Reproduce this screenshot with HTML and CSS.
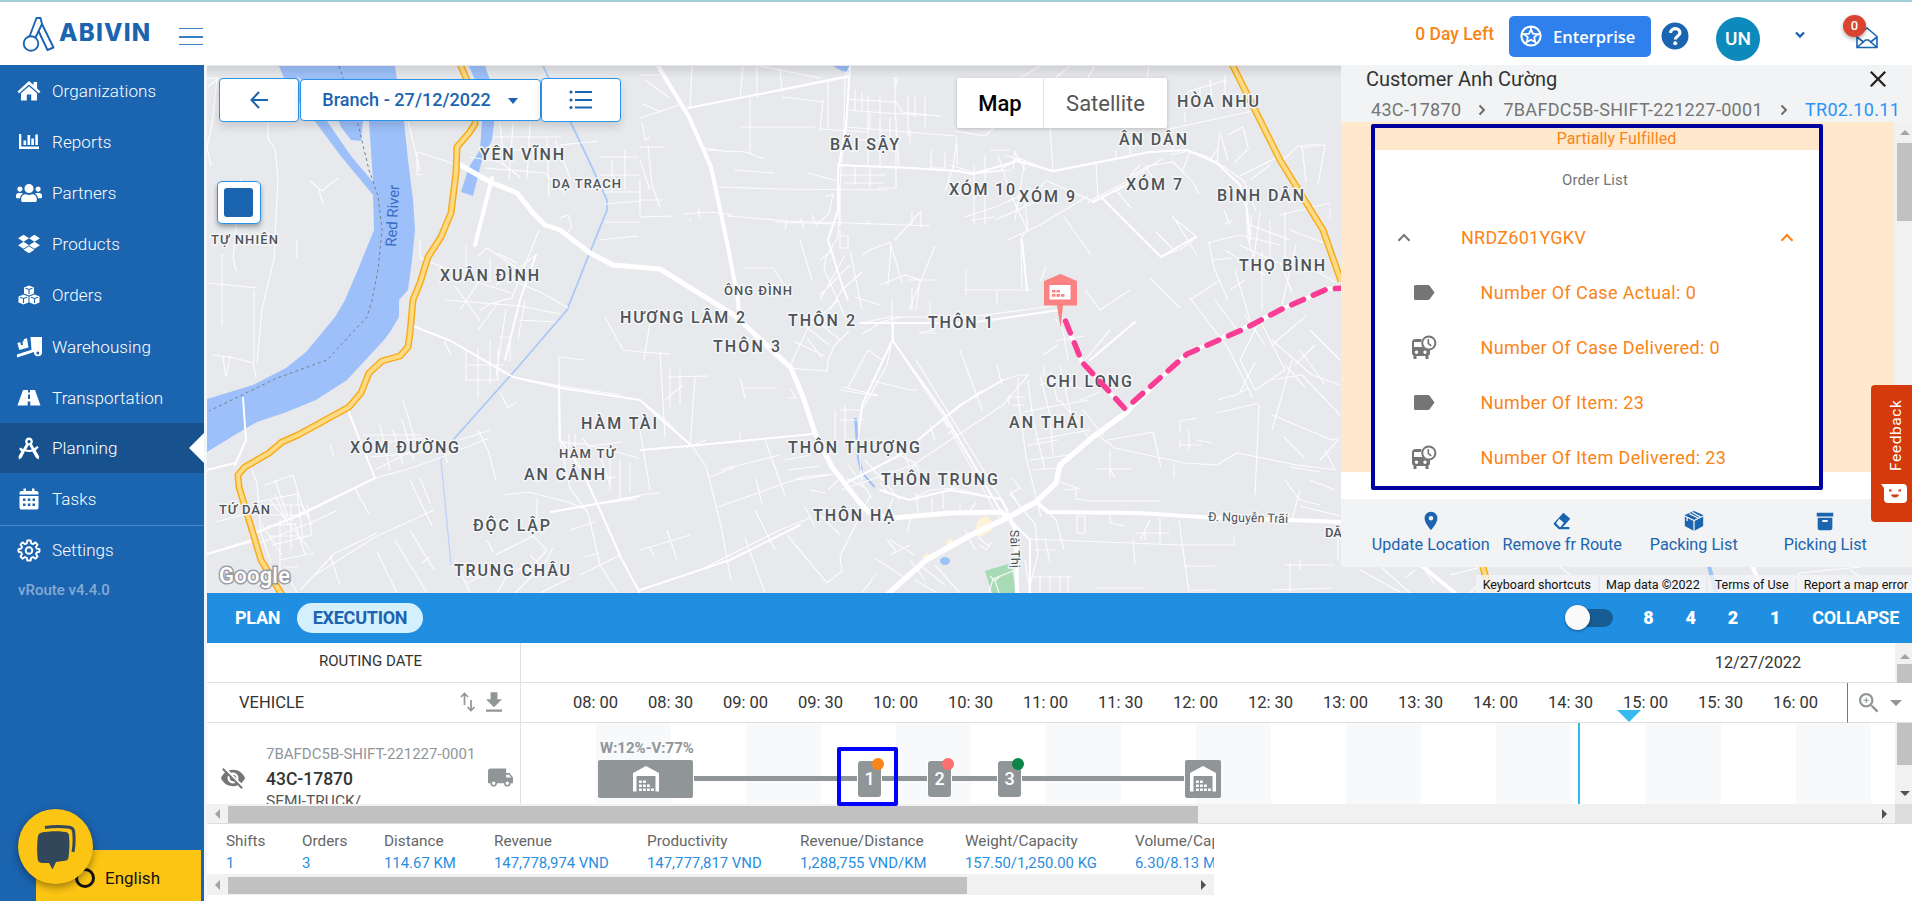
FILE: index.html
```html
<!DOCTYPE html>
<html lang="en">
<head>
<meta charset="utf-8">
<title>vRoute - Planning</title>
<link rel="stylesheet" href="styles.css">
</head>
<body>
<header class="header">
  <svg class="logo-mark" viewBox="0 0 34 36" width="34" height="36"><g fill="none" stroke="#1b64b0" stroke-width="1.9" stroke-linejoin="round"><circle cx="9" cy="27.5" r="7.3"/><path d="M7.5 20.5 14.5 2h4l1.5 6L13.500 21.500"/><path d="M20 8 31.500 31.500 25.500 34 16.500 15"/></g></svg>
  <span class="logo-text">ABIVIN</span>
  <span class="burger"><i></i><i></i><i></i></span>
  <div class="header-right">
    <span class="days">0 Day Left</span>
    <button class="enterprise"><svg viewBox="0 0 22 22" width="22" height="22" fill="none" stroke="#fff"><circle cx="11" cy="11" r="9.600" stroke-width="2"/><path stroke-width="1.800" d="m11 4.500 2 4.200 4.600.5-3.400 3.200 1 4.600-4.200-2.300L6.800 17l1-4.600L4.400 9.200 9 8.700zM11 1v3M2 9l2.500.5M20 9l-2.500.5M5 18.500 6.800 17M17 18.500 15.200 17"/></svg><span>Enterprise</span></button>
    <svg class="help" viewBox="0 0 28 28" width="28" height="28"><circle cx="14" cy="14" r="13.500" fill="#1b64b0"/><path d="M9.500 10.800c.5-5.600 9.600-5.400 9.400.1-.1 3.300-4.500 3.500-4.600 6.600" fill="none" stroke="#fff" stroke-width="3.200"/><circle cx="14.200" cy="21.300" r="2" fill="#fff"/></svg>
    <span class="avatar">UN</span>
    <svg class="chev" viewBox="0 0 12 8" width="12" height="8"><path d="m2 1.500 4 4 4-4" fill="none" stroke="#1b64b0" stroke-width="2.400"/></svg>
    <span class="mail"><svg viewBox="0 0 24 24" width="24" height="24" fill="none" stroke="#1b64b0" stroke-width="1.600"><path d="M2 10.500 12 2l10 8.500V21.500H2zM2 11l7 5.500M22 11l-7 5.500M2 21.500l8.500-7.500h3l8.500 7.500"/></svg><b>0</b></span>
  </div>
</header>

<div class="main">
<nav class="sidebar">
  <a class="item"><svg viewBox="0 0 26 24"><path d="M13 2 1.500 12.500l1.600 1.700L13 5.400l9.900 8.800 1.600-1.700-3.400-3.100V3h-3.600v3.100z"/><path d="M13 7.300 5 14.300V21.500h5.800v-6h4.400v6H21v-7.200z"/></svg>Organizations</a>
  <a class="item"><svg viewBox="0 0 26 24"><path d="M3 4h2.300v12.500H23v2.500H3zM7.500 10.500h2.600V15H7.500zM11.500 5h2.600v10h-2.600zM15.300 8.500h2.600V15h-2.600zM19.300 4.500h2.600V15h-2.600z"/></svg>Reports</a>
  <a class="item"><svg viewBox="0 0 640 512"><path d="M96 224c35.300 0 64-28.700 64-64s-28.700-64-64-64-64 28.700-64 64 28.700 64 64 64zm448 0c35.300 0 64-28.700 64-64s-28.700-64-64-64-64 28.700-64 64 28.700 64 64 64zm32 32h-64c-17.600 0-33.500 7.100-45.100 18.600 40.300 22.100 68.900 62 75.100 109.400h66c17.700 0 32-14.300 32-32v-32c0-35.300-28.700-64-64-64zm-256 0c61.900 0 112-50.100 112-112S381.900 32 320 32 208 82.100 208 144s50.100 112 112 112zm76.800 32h-8.300c-20.800 10-43.900 16-68.500 16s-47.600-6-68.500-16h-8.300C179.600 288 128 339.600 128 403.200V432c0 26.500 21.500 48 48 48h288c26.500 0 48-21.500 48-48v-28.800c0-63.600-51.600-115.200-115.200-115.200zm-223.700-13.400C161.500 263.100 145.600 256 128 256H64c-35.300 0-64 28.700-64 64v32c0 17.700 14.300 32 32 32h65.900c6.300-47.400 34.900-87.300 75.200-109.400z"/></svg>Partners</a>
  <a class="item"><svg viewBox="-50 -20 628 552"><path d="M264.400 116.300l-132 84.300 132 84.300-132 84.300L0 284.100l132.300-84.300L0 116.300 132.300 32l132.100 84.300zM131.600 395.700l132-84.300 132 84.300-132 84.300-132-84.300zm132.800-111.600l132-84.300-132-83.600L395.700 32 528 116.300l-132.300 84.300L528 284.800l-132.300 84.300-131.300-85z"/></svg>Products</a>
  <a class="item"><svg viewBox="0 0 26 24"><path d="m13 2.500 5 2v6l-5 2-5-2v-6zM7.500 11.500l5 2v6l-5 2-5-2v-6zM18.500 11.500l5 2v6l-5 2-5-2v-6z"/><path d="m9.500 5.200 3.500 1.300 3.500-1.300M13 6.500V11M4 14.200l3.500 1.300 3.500-1.300M7.500 15.500V20M15 14.200l3.500 1.300 3.500-1.300M18.500 15.500V20" fill="none" stroke="#1b64b0" stroke-width="1.100"/></svg>Orders</a>
  <a class="item"><svg viewBox="0 0 26 24"><path d="M14.500 2H26v15.500a4 4 0 1 1-8-.5L1 22.500v-3l14.500-4.700zM1.300 8l3-.7.8 3 2-.5-.8-3 1-.3L8 4l3-.7 1.500 9.200L3.300 15z"/><circle cx="21.800" cy="18" r="1.500" fill="#1b64b0"/></svg>Warehousing</a>
  <a class="item"><svg viewBox="0 0 26 24"><path d="M7 4h5v2.500h2V4h5l5.500 15.500H14.300V15.500h-2.600v4H1.500zM12 8.500V13h2V8.500z" fill-rule="evenodd"/></svg>Transportation</a>
  <a class="item active"><svg viewBox="0 0 26 24"><path d="M13 1.500a4 4 0 0 1 3 6.500l2.200 4.200 3-2.300 1.500 1.700-3 2.900 3.500 6-.6 3-2.700-1.700-3.500-6.200c-2.700.8-5 .6-7.500-.3L5.700 21.800 3 23.500l-.6-3L5.300 15.600 3 13l1.800-1.500 2.200 1.700L10 8a4 4 0 0 1 3-6.500zM13 8.800l-2.800 4.800c2 .6 3.600.6 5.600 0zM13 4a1.600 1.600 0 1 0 .01 0z" fill-rule="evenodd"/></svg>Planning</a>
  <a class="item"><svg viewBox="0 0 26 24"><path fill-rule="evenodd" d="M3.500 6a2 2 0 0 1 2-2h2V1.500h2.500V4h6V1.500h2.500V4h2a2 2 0 0 1 2 2v1.500h-19zM3.500 9h19v11.500a2 2 0 0 1-2 2h-15a2 2 0 0 1-2-2zM7 11.500V14h2.500v-2.500zM11.800 11.500V14h2.500v-2.500zM16.500 11.500V14H19v-2.500zM7 16.500V19h2.500v-2.500zM11.800 16.500V19h2.500v-2.500zM16.500 16.500V19H19v-2.500z"/></svg>Tasks</a>
  <a class="item settings"><svg viewBox="0 0 24 24"><g fill="none" stroke="#fff" stroke-width="1.900" stroke-linejoin="round"><path d="m10.300 2.500-.5 2.800-1.800.8-2.500-1.700-2 2.200L5 9l-.8 1.600-2.700.6v2.600l2.700.6.8 1.700-1.500 2.400 2 2.200L8 19l1.800.8.5 2.700h3.400l.5-2.700L16 19l2.500 1.700 2-2.200L19 16.100l.8-1.700 2.700-.6v-2.600l-2.700-.6L19 9l1.500-2.400-2-2.200L16 6.100l-1.800-.8-.5-2.800z"/><circle cx="12" cy="12.500" r="3.300"/></g></svg>Settings</a>
  <div class="version">vRoute v4.4.0</div>
  <div class="language"><i></i>English</div>
  <div class="chat"><svg viewBox="0 0 40 46" width="40" height="46"><path fill="#33475b" d="M8 8c6-1 18-1 22 0 2 .5 3 2 3 3.500.8 7 .6 15-.5 22-.4 2-1 2.300-2 3l-10.500 1.500L16.500 45.500 13 39H6c-3-.3-4-1.500-4.300-4C.9 28 .9 21 1.800 13 2 10 4 8.500 8 8z"/><path fill="none" stroke="#fdc513" stroke-width="2" d="M4 7.500c9-2 20-2 27-.5 3 .8 3.500 2.500 3.700 5 .7 8 .5 14-.7 20.500"/><path fill="none" stroke="#33475b" stroke-width="3" d="M9 3.500c9-1.500 17-1.300 24.500-.2 3 .5 4 2 4.200 4.700.7 7 .6 13.500-.7 20"/></svg></div>
</nav>

<section class="content">
<div class="map">
<svg class="tiles" viewBox="207 66 1705 527" width="1705" height="527">
  <rect x="207" y="66" width="1705" height="527" fill="#e8e9ed"/>
  <!-- water -->
  <g fill="#9dc0fa">
    <path d="M279 66 289 90 314 120 340 155 373 195 374 230 359 267 345 300 335 317 306 352 286 368 253 385 207 399V452L238 433 257 422 284 413 316 400 347 380 384 340 390 332 399 317V300L408 290 412 260 415 230 413 200 408 160 404 121 397 80 395 66z"/>
    <path d="M469 66H485L490 80 494 123 492 140 482 160 473 196 461 192 469 167 480 150 482 121 475 80z"/>
    <path d="M833 66h16l1 6-8-1zM854 418h3l2 35 4 17-3 1-3-13zM862 471l13 15-1 2-11-13z"/><ellipse cx="945" cy="561" rx="5" ry="4"/>
  </g>
  <path fill="#e8e9ed" d="m294 72 33 49 24 35 22 26-4-61h-6l-2 20-10-1-10-13-8-22-36-29z"/>
  <path d="M543 66 571 123 590 163 607 200V210L588 257 567 310 518 367 453 440" stroke="#a9c8fa" stroke-width="1.800" fill="none"/>
  <path d="m453 440-12 20 10 105" stroke="#bdd3f8" stroke-width="1.300" fill="none"/>
  <path d="M1709 566 1716 593" stroke="#9dc0fa" stroke-width="4"/>
  <path d="M339 66 357 120 369 170 378 196 382 230 378 270 372 300 367 317 327 360 277 378 209 411" fill="none" stroke="#777f8b" stroke-width="1" stroke-dasharray="3 3"/>
  <path fill="#a8dab5" d="m985 571 26-8 5 30h-24z"/><path fill="#fdf3d8" d="m978 520 8-5 6 6-1 10-12 7-5-4zM945 542l6-4 3 4-6 4zM922 557l6-5 2 6-6 3z"/>
  <!-- local streets -->
  <g fill="none" stroke="#fff" stroke-width="1.200" opacity=".9">
    <path d="M207 78h10l-4 40-6 30 4 18M268 121v18l7 10 3 30-4 80-12 50-5 54M217 79l-9 8M241 178l-8 80 3 13M207 283l50 5M222 254v72M254 291v71M310 181l12 10 16-13M297 240v18M319 190l4 14M213 355l17 2 23 6 3 14M223 357l3 20 4-21"/>
    <path d="M408 121l12 50M418 152l40 13M417 152v22l5 1M420 240v18l20 8 33 15 38 12M466 245v30M478 256l9-8 30 20-10 16M480 280l-20 30M497 253l20 10M490 258v25M512 280l32 14 24 14M539 230l-28 70M536 255l-40 30M500 300l-22 30M455 286l25 35"/>
    <path d="M493 137h68M497 150h62M485 168l60 5 20 20M500 124l4 40M513 124l-4 55M530 124l-3 55M547 137l2 60M555 140l16 40M470 157l30 5 20 15M560 145l38-4M600 175h40M604 192h36M600 157h38M612 160v32M625 150v40M605 204l35-3M640 180v35M560 218l8-3 4 12-8 10M605 222h35M600 240l38-4"/>
    <path d="M413 326l38 15 62 36 48 9 60 9M444 341l7 14M466 350v30h32v-32M478 348v50M490 340v44M466 365h38M498 337h12v25M506 309l-10 67M559 356v85l12 2M560 357l24 3M525 300l-7 40M605 317l18 33 17 2M518 320l38 2M500 392l8 16 8-6M480 310l10-6 20-6M445 300l75 6 40 8"/>
    <path d="M347 407l28 72M375 478l-25 12-60 28M375 478l30-8 35-12 49-20M355 488l14 26M362 435h60M365 445l65-8M370 457l60-5M380 425l10 45M393 430l10 35M402 420l12 40M415 448l14-7M440 445l8 18M403 400l12 40M330 445l4 12M478 430l10 20 8 30M410 480l22 46M420 478l10 25M460 440l30-10M375 470l50-26"/>
    <path d="M215 522l32-8M213 552l44-14M250 465l7 18 4 50 10 30M257 502l40-8 6 45M265 485l28-10 12 40M275 480l14 40M262 505h40M264 515h34M267 526l28-2 10 30M270 536h30M272 545l40-10-5-30M280 520v50M291 505v45M300 500l12 25M260 543l50-20 26-12M279 560l35-7M285 570l12 23M275 495l14 30M262 525l20 30M270 500l40 50M283 567h15"/>
    <path d="M315 575l60-38 59-27M330 555l10 30M377 552l20 41M395 540l32 53M410 530l24 40M300 590l35-37 42-20M422 563l8-6M487 540l6 12M498 592l8-15 20-12M515 593l20-20 10-10 8-15M525 540l8-4 14 14-18 20-8-6M530 555l10 10M551 512l46-8 40-5M503 495l25-3 40 10 20 8M560 443l10 45 18 25 12 52 18 28M537 498v28M495 555l30-15M570 530l25-8M585 557l14-4M580 575l40-20M455 560l15 33M467 583l18-8M540 593l30-15"/>
    <path d="M561 443l23 1 25 6 30 8M569 434v14M575 434v14M582 438l10 12M588 446l35-4M600 455l10 30M610 460v30M620 460v40M630 462v30M588 480l28-3"/>
    <path d="M640 118l42-14M642 122l3 18 5-3M640 147h25M648 145l4 40 8 22M640 200h23M640 217l33-1M683 214l27-2 22 3M699 208v10M690 218v3M640 160l10 30M643 104l18 8M645 80l25 18M640 75h20M692 66l-2 42M750 98v56M740 127h75M752 96l98-19M760 66l60 12M743 66l-3 33M780 70l2 22M757 66v32M782 97l43 5M850 66l-5 11-1 50-4 60-2 50-12 20-2 12 22 50M706 150l40 2 18 7M734 170l40 3M718 187l60 2 110 1M728 216l60 5 90 3 52 2M705 148l25 4"/>
    <path d="M828 80v48M820 129l46 3M823 100l-3 30M846 99l50 3 6 10 36 4M846 110l40 3 55 3M846 127l50 4 60 5M855 90v20M862 92v18M868 95v70M880 95v20M895 78v30l4 60M908 96v40M915 97v20M925 97v30M870 114v16M880 117v52M890 118v20M893 78h5l-3 10M910 130v14M845 140h40M838 165l60 2 60 4 15 3 38-4M838 175h48M845 183h40M855 165v20M870 165v22M896 130v58h-18M931 150v18h14v-15M808 173l30 8M840 187v40M825 197l8-3-4 20-12 10M775 222l60 2M787 220l-2 10M800 218l4 10M812 215l5 12M840 224v-10M912 211v15M921 210v17M868 220v5"/>
    <path d="M957 137l-4 30-8 24M957 145v20M950 165l25 8 25-3 18-12 35 14 80-16M1050 128l3 43M1005 126h-10l-10 10-30-5M998 155l14 42 15 32-6 10 1 50M985 155v70M974 165v60M1005 155l15 5 5 10M1015 150l-2 20M990 150h20M965 217l30-10 45-20M970 220l25-3M1015 152l5 12M1025 160l-10 60M1040 200l-45 20M1045 180l50 22M1088 202l15-8 30-16 30-20M1008 240l30-14 50-30M1045 182l-20 20 3 30M1064 217l27 38M1103 199l58 58 20-8 16-12-25-20M1116 190l15 18M1172 215l25 40M1156 232l17 17M1128 178l20-12 25-4 20 20 6 12M1145 165l12 20M1130 175l10-10M1096 162l2 35"/>
    <path d="M1094 66l-7 14M1149 66l-2 12M1040 66l-20 12M1070 66l-15 12M1187 92l40-12M1200 98v-12M1212 97l-2-18M1225 100v-25M1165 130l92-20M1185 122v-10M1170 155l18-4 16 4 20 12 20 14 12 30M1190 152l-8 20M1217 165l2-30M1240 176l40-20M1234 163l15-15M1228 135l15-8 5 20M1270 165l-20 15M1210 160l8-12M1116 160v-10M1130 157v-12M1173 151v-10M1220 132l8 28"/>
    <path d="M1247 201v35l6 20M1251 215v20M1207 243l32-8M1209 243l5 25 14 32M1212 260l20-2M1230 225l-6-15M1233 220l-8 4M1240 235l40 10M1240 245l38 18M1260 212l-8 60M1270 220v50M1250 225l40 15M1285 212v50M1225 250l40 25M1235 270l15 50M1262 250v60M1300 148l25-3-7 40M1302 145l4 37M1283 160l15-14 22-2M1330 208v10M1280 215l50-12M1290 230l40 15M1280 262l12 30M1296 245l-14 60M1300 262l35 20M1230 290l15-10M1215 300l22 30"/>
    <path d="M652 310l-8 50M640 352l30 2M660 352l5 85M668 377l40-1M665 400l18-15M670 368v40M680 370v35M695 377l-5 70M740 378l5 20M742 388h35M790 388l6 10M787 398h10M640 450l50-4 80-8 45-4M740 440v-8M640 400l25 20 25 25M640 430l10 60M692 446l14 20 15 60 10 55M706 440l-20 8M640 495l20-2M718 507l85-30 30-3M710 477l25-10M765 440l20 55M756 479l6 25M720 470l60-15M785 460l25-5M789 470l30-4M797 480l32-5M810 490l15 3M640 550l50-15M650 548l4 8M640 590l60-20 80-40 30-12M667 530l10 30M787 535l40 48 15-12-2-15 30-60M755 510l20 40M745 538l20 55M805 507l10 20M820 515l20 20"/>
    <path d="M862 334l14-8 5-4 20-5M789 368l20-42 30-26M789 368l38 3 1-10 6-15 15-15M807 338l15 20M795 342l30 14M804 325l25 20M810 315l30 25M880 305l-25-8M860 323l30-6h80l90-12M892 300v40l-5 25-25 45-4 30 4 40M868 350l14 10M868 350l-20 37M842 387l36 8M840 390l38 6M870 380l40 10h8M835 410v30M845 405v35M840 420h25M840 410h20M892 340l52 78 55 100M916 360l92 150M912 310v-22M930 320v-18M960 350l22 60M997 365l5 20M1003 380l15-5h10l-25 30-90 60-72 25M918 333h18M921 332l14-2M943 418l5 10M982 390l-40 30M930 425l5 15M948 434l6-5"/>
    <path d="M1018 377v20l8 60 15 60M1010 397h15M1012 405h12M1009 395v10M1028 380l5 40 12 50M1040 375l10 40 3 40M1023 412l65-12M1050 372l8 30M1060 365l10 45 20 30M1040 385l15-5M1068 360l-5-30-8-12M1055 341l30-5M1043 355l15-10M1044 365v12M1090 360l45-38M1075 380l-10 10M1060 380l25 10M1080 400l20-8M1030 460l40-5M1033 470l25-2M1035 440l55-10M1060 400l20 25M1028 445l30-5M1083 410l20 25"/>
    <path d="M1095 433l20 15 70 15 32 2 20-12 60 12 40 5M1108 440l45-8 8 35M1180 433v-12l17-3M1180 445h22M1189 430v20M1197 440l15 3M1218 400l15-5M1231 398l17-10M1240 392l15-30M1110 450v28M1097 469h35M1110 469l5 9M1174 463v15M1217 413l42-10M1259 405l-4 90M1180 440v8M1064 490l12-1v10l14 2h70M1060 482l20 7M1036 500l20 20 8 30M1085 516v17h-8v-17zM1110 515v8l15 3M1145 530v10M1160 518v25M1179 520l10 73M1234 535v10h-55l-150-6M1045 538l5 25M1035 550h20M1133 540l2 25M1183 566h32M1190 590h25M1095 588h50M1150 520l-10 20M1135 533h35"/>
    <path d="M1012 478l8 10-10 6 25 30 3 30-10 40M1010 490l12 20M1025 560l5 33M1040 575v18M1050 575v18M1060 575v18M1068 575v18M1033 577h40M880 483l8 10 22 7 20-10 25-2 45 12M893 498l-8 20M911 518l-4 14M943 491v18M880 480l12-10M895 453l20 10 4 8M905 455l5 15 5-5M865 460l35 40M848 465l15 20M862 483l10 15M846 478l20 10M828 490l15-15M918 513l-2-20M932 513v-15M960 512v-8M970 510l6-7M965 530l10 20M978 537l12 10M980 545l6 5 6-8M887 540l10 12M890 555l20-10M875 558l30 20M905 575l15-5M910 560l15 20M915 580l22 13M935 565l25 28M890 540l25 15M862 593l15-20M920 565l25 20"/>
    <path d="M1272 340l40 35 28 10M1272 380l30-5 38 40M1285 365l20 22M1300 350l25 35M1315 345l-20 20M1272 430l20-70M1284 437l20 20M1290 467l30 5M1320 460l18-20M1285 480l15 20 20 5M1310 480l25 10M1300 490l-8 30M1325 450l10 20M1272 415l60 25 7-2M1310 330l30 30M1300 506l40 10M1290 563v30M1300 560v10M1272 590l60-2M1338 520v40M1284 565h50"/>
    <path d="M1272 345l35-30M1190 300l30-20M1245 315l20 30M1260 320l25 50-30 20-15-30zM1190 298l38 50 25 50M1150 278l30 30M1110 330l-25 30M1085 290l15 20 30-20"/>
    <path d="M895 240l25-28M862 255l8-5 20-8 12 40M880 285l25-10 15 5-4 30M888 285l3-40M850 250l12 60M830 310l12-20 20-18M820 300l25-45M800 240l12 40M908 280l30 0M935 246l-26 64M965 290h65M966 270v25M997 290v15M1040 282l6-15M820 260l10-8M745 268h28l10 15M850 265l-30 30M840 230v18h8v-12h-8"/>
    <path d="M1360 570l40 22M1380 566l30 27M1415 570l-10 8M1425 570l10 15M1450 575l40-10M1470 593l20-20M1560 567l20 15M1600 593l60-15M1780 593l20-20 60-6M1850 570l30 20"/>
    <path d="M990 576l5 5 5-5M995 581l4 12M989 593l4-14 20-8"/>
  </g>
  <!-- arterial roads -->
  <g fill="none" stroke="#fff" stroke-linejoin="round" stroke-linecap="round">
    <g stroke-width="2"><path d="M413 326 451 341 513 377 561 388 640 400 665 423 691 445M641 450 700 445 812 434M860 323 892 323H970L1060 310M688 108 750 96 849 76M850 66 846 127 838 170 838 210 828 240 842 285 848 300M838 165 910 168 958 171 972 174 1018 161 1053 171 1150 152 1187 150 1217 163 1240 185 1247 210 1250 240M893 323V341L943 412 1000 510 1030 540 1030 593M892 341 862 405 859 430M1003 380 960 405 900 455 846 483M640 590 730 560 800 525M559 385 560 440 582 470 600 510 622 560 640 593M551 512 640 496M1103 199 1161 257 1195 237M1022 240 1027 290M880 490 909 500 950 490 1001 499 1009 515M1093 202 1130 183M347 408 375 478 300 515 250 535M536 255 520 300 505 360M207 554 252 541M243 398 246 440 235 465M207 470 235 463M1090 360 1135 322"/></g>
    <path stroke-width="5" d="M457 163 490 182 517 193 533 213 545 225 560 230 590 253 613 265 660 269 681 282 734 315 791 368 803 397 815 433 832 467 860 503 872 515 893 518 950 513 1001 512 1009 518"/>
    <path stroke-width="4" d="M658 66 689 117 711 167 728 247 738 300 739 317M1036 502 1048 512 1140 513 1200 517 1290 520 1341 522M1009 518 1016 530 1017 593M492 178 475 245M1422 566 1455 593M1752 566 1765 593"/>
    <path stroke-width="5.500" d="M889 593 926 560 967 537 1009 517 1036 502 1056 483 1060 465 1093 437 1127 412"/>
    <path stroke-width="4" d="M1064 320 1082 362 1127 412 1187 353 1244 328 1280 310 1327 289 1341 288"/>
  </g>
  <!-- highways -->
  <g fill="none" stroke-linejoin="round">
    <g stroke="#f7ac1b" stroke-width="7"><path d="M460 64 467 80 475 113V124L469 133 457 147 456 173 451 213 441 237 428 257 420 283 413 300 410 333 408 347 400 356 382 361 369 373 361 393 349 407 298 435 282 442 269 453 245 467 238 475 239 487 249 520 261 560 282 595"/><path d="M1232 64 1255 110 1280 160 1323 230 1341 281M1482 564 1491 595"/></g>
    <g stroke="#fddb84" stroke-width="4"><path d="M460 64 467 80 475 113V124L469 133 457 147 456 173 451 213 441 237 428 257 420 283 413 300 410 333 408 347 400 356 382 361 369 373 361 393 349 407 298 435 282 442 269 453 245 467 238 475 239 487 249 520 261 560 282 595"/><path d="M1232 64 1255 110 1280 160 1323 230 1341 281M1482 564 1491 595"/></g>
  </g>
  <!-- place labels -->
  <g class="lbl">
    <text x="480" y="160" textLength="84">YÊN VĨNH</text><text x="440" y="281" textLength="99">XUÂN ĐÌNH</text>
    <text x="830" y="150" textLength="69">BÃI SẬY</text><text x="949" y="195" textLength="66">XÓM 10</text>
    <text x="1019" y="202" textLength="56">XÓM 9</text><text x="1126" y="190" textLength="56">XÓM 7</text>
    <text x="1119" y="145" textLength="68">ÂN DÂN</text><text x="1177" y="107" textLength="82">HÒA NHU</text>
    <text x="1217" y="201" textLength="87">BÌNH DÂN</text><text x="1239" y="271" textLength="86">THỌ BÌNH</text>
    <text x="620" y="323" textLength="125">HƯƠNG LÂM 2</text><text x="788" y="326" textLength="67">THÔN 2</text>
    <text x="928" y="328" textLength="65">THÔN 1</text><text x="713" y="352" textLength="67">THÔN 3</text>
    <text x="1046" y="387" textLength="86">CHI LONG</text><text x="1009" y="428" textLength="75">AN THÁI</text>
    <text x="788" y="453" textLength="132">THÔN THƯỢNG</text><text x="881" y="485" textLength="117">THÔN TRUNG</text>
    <text x="813" y="521" textLength="81">THÔN HẠ</text><text x="581" y="429" textLength="76">HÀM TÀI</text>
    <text x="524" y="480" textLength="81">AN CẢNH</text><text x="350" y="453" textLength="109">XÓM ĐƯỜNG</text>
    <text x="473" y="531" textLength="77">ĐỘC LẬP</text><text x="454" y="576" textLength="116">TRUNG CHÂU</text>
  </g>
  <g class="lbl small">
    <text x="552" y="188" textLength="69">DẠ TRẠCH</text><text x="211" y="244" textLength="67">TỰ NHIÊN</text>
    <text x="724" y="295" textLength="68">ÔNG ĐÌNH</text><text x="559" y="458" textLength="56">HÀM TỬ</text>
    <text x="219" y="514" textLength="51">TỨ DÂN</text><text x="1325" y="537">DÂ</text>
  </g>
  <g class="lbl road"><text x="1208" y="521" textLength="80" transform="rotate(1.500 1208 521)">Đ. Nguyễn Trãi</text><text x="0" y="0" textLength="38" transform="translate(1010 530) rotate(88)">Sài Thị</text></g>
  <text class="river" textLength="62" transform="translate(396 247) rotate(-87)">Red River</text>
  <text class="google" x="219" y="583" textLength="71">Google</text>
  <!-- route and stop marker -->
  <path d="M1065.500 321 1082 362 1127 411M1133 402 1187 354 1244 329 1280 310 1327 289 1345 288" fill="none" stroke="#fa3d94" stroke-width="5.500" stroke-linecap="round" stroke-dasharray="13 10.500"/>
  <path fill="#fb8282" d="M1044 281 1060.500 274 1077 281V305.500H1063L1060.500 328 1057 305.500H1044z"/>
  <path fill="#fff" d="M1049.500 285h21v14.500h-21z"/><path fill="#fb8282" d="M1052 290h3.500v2.500H1052zM1056.500 290h3.500v2.500h-3.500zM1052 294h3.500v2.800H1052zM1056.500 294h3.500v2.800h-3.500zM1061 294h3.500v2.800H1061z"/>
</svg>

<div class="toolbar">
  <button class="tb side"><svg viewBox="0 0 24 24" width="24" height="24"><path fill="none" stroke="#1b64b0" stroke-width="2" d="M21 12H4.500M12 4 4.500 12l7.500 8"/></svg></button>
  <button class="tb branch">Branch - 27/12/2022<i class="caret"></i></button>
  <button class="tb side"><svg viewBox="0 0 24 20" width="24" height="20" fill="#1b64b0"><path d="M6 1h17v2H6zM6 9h17v2H6zM6 16.500h17v2H6z"/><circle cx="2" cy="2" r="1.600"/><circle cx="2" cy="10" r="1.600"/><circle cx="2" cy="17.500" r="1.600"/></svg></button>
</div>
<div class="square"><i></i></div>
<div class="maptype"><span class="on">Map</span><span>Satellite</span></div>
<div class="attrib"><span>Keyboard shortcuts</span><span>Map data ©2022</span><span>Terms of Use</span><span>Report a map error</span></div>

<aside class="panel">
  <div class="p-title"><span>Customer Anh Cường</span><svg viewBox="5 5 14 14" width="16" height="16"><path fill="#222" d="M19 6.410 17.590 5 12 10.590 6.410 5 5 6.410 10.590 12 5 17.590 6.410 19 12 13.410 17.590 19 19 17.590 13.410 12z"/></svg></div>
  <div class="crumbs"><span>43C-17870</span><svg viewBox="0 0 8 12"><path d="m1.500 1.500 4.500 4.500-4.500 4.500"/></svg><span>7BAFDC5B-SHIFT-221227-0001</span><svg viewBox="0 0 8 12"><path d="m1.500 1.500 4.500 4.500-4.500 4.500"/></svg><span class="cur">TR02.10.11</span></div>
  <div class="p-body">
    <div class="p-scroll">
      <div class="orders">
        <div class="status">Partially Fulfilled</div>
        <div class="o-head">Order List</div>
        <div class="o-code"><svg viewBox="0 0 14 9" width="14" height="9"><path d="m1.500 7.800 5.500-5.800 5.500 5.800" fill="none" stroke="#757575" stroke-width="2"/></svg><span>NRDZ601YGKV</span><svg viewBox="0 0 14 9" width="14" height="9"><path d="m1.500 7.800 5.500-5.800 5.500 5.800" fill="none" stroke="#fa8416" stroke-width="2"/></svg></div>
        <div class="o-row"><svg viewBox="0 0 26 26"><path d="M3 6.500A1.500 1.500 0 0 1 4.500 5H17c.8 0 1.400.3 1.800.9l4.700 6.600-4.700 6.600c-.4.600-1 .9-1.800.9H4.500A1.500 1.500 0 0 1 3 18.500z"/></svg>Number Of Case Actual: 0</div>
        <div class="o-row"><svg viewBox="0 0 26 26"><path fill-rule="evenodd" d="M10.500 4H5C2 4 1 5.500 1 7v11c0 1.500.8 2 1.500 2.500V24h3v-3h9v3h3v-3.500c1-.5 1.500-1 1.500-2.500v-3a8 8 0 0 1-7.500-3H3V7h7.200zM5.500 15.500a1.700 1.700 0 1 0 .01 0zM14 15.500a1.700 1.700 0 1 0 .01 0z"/><circle cx="17.800" cy="8" r="6.600" fill="#fff" stroke="#757575" stroke-width="2"/><path d="M17.300 4v4.500l3 2.300" fill="none" stroke="#757575" stroke-width="1.600"/></svg>Number Of Case Delivered: 0</div>
        <div class="o-row"><svg viewBox="0 0 26 26"><path d="M3 6.500A1.500 1.500 0 0 1 4.500 5H17c.8 0 1.400.3 1.800.9l4.700 6.600-4.700 6.600c-.4.600-1 .9-1.800.9H4.500A1.500 1.500 0 0 1 3 18.500z"/></svg>Number Of Item: 23</div>
        <div class="o-row"><svg viewBox="0 0 26 26"><path fill-rule="evenodd" d="M10.500 4H5C2 4 1 5.500 1 7v11c0 1.500.8 2 1.500 2.500V24h3v-3h9v3h3v-3.500c1-.5 1.500-1 1.500-2.500v-3a8 8 0 0 1-7.500-3H3V7h7.200zM5.500 15.500a1.700 1.700 0 1 0 .01 0zM14 15.500a1.700 1.700 0 1 0 .01 0z"/><circle cx="17.800" cy="8" r="6.600" fill="#fff" stroke="#757575" stroke-width="2"/><path d="M17.300 4v4.500l3 2.300" fill="none" stroke="#757575" stroke-width="1.600"/></svg>Number Of Item Delivered: 23</div>
      </div>
    </div>
    <div class="vbar"><i class="up"></i><b></b></div>
  </div>
  <div class="p-actions">
    <a><svg viewBox="0 0 24 24"><path d="M12 2C8.130 2 5 5.130 5 9c0 5.250 7 13 7 13s7-7.750 7-13c0-3.870-3.130-7-7-7zm0 9.500a2.500 2.500 0 1 1 0-5 2.500 2.500 0 0 1 0 5z"/></svg>Update Location</a>
    <a><svg viewBox="0 0 24 24"><path fill-rule="evenodd" d="M13.500 3 21 9.500 13 18.500h7V21H8.500L3.500 16c-.7-.7-.7-1.500 0-2.200zM9 9.500 5.500 14.500 9.500 18.500h1l3.500-4.500z"/></svg>Remove fr Route</a>
    <a><svg viewBox="0 0 24 24"><path d="M12 1 22 5.500V17.500L12 23 2 17.500V5.500z"/><path fill="none" stroke="#f1f3f4" stroke-width="1.400" d="m2 6.500 10 5 10-5M12 11.500V23M7 4l10 5M4.500 12v-4M10 2.500l9 5"/></svg>Packing List</a>
    <a><svg viewBox="0 0 24 24"><path fill-rule="evenodd" d="M3 3h18v4H3zM4 8.500h16V20a2 2 0 0 1-2 2H6a2 2 0 0 1-2-2zM9 11v2h6v-2z"/></svg>Picking List</a>
  </div>
</aside>
<div class="feedback"><span>Feedback</span><svg viewBox="0 0 26 19" width="26" height="19"><path fill="#fff" d="M0 0h22a4 4 0 0 1 4 4v11a4 4 0 0 1-4 4H7a4 4 0 0 1-4-4V4z"/><path d="M8 5.500h2.500v2H8zM17.500 5.500H20v2h-2.500zM10 10.500h8c-.5 4-7.500 4-8 0z" fill="#d43a0b"/></svg></div>
</div>

<div class="bluebar">
  <span class="plan">PLAN</span><span class="exec">EXECUTION</span>
  <div class="bar-right"><span class="toggle"><i></i></span><b>8</b><b>4</b><b>2</b><b>1</b><span class="collapse">COLLAPSE</span></div>
</div>

<div class="gantt">
  <div class="g-row r1"><div class="g-left center">ROUTING DATE</div><div class="g-main date">12/27/2022</div><div class="gs top"><i class="up"></i><b></b></div></div>
  <div class="g-row r2"><div class="g-left vehicle"><span>VEHICLE</span>
      <svg viewBox="0 0 16 20" width="16" height="20"><path fill="none" stroke="#909698" stroke-width="1.700" d="M4.500 13V2M1 5l3.500-3.500L8 5M11 8v10M7.500 15l3.500 3.500 3.500-3.500"/></svg>
      <svg viewBox="5 3 14 17" width="16" height="20"><path fill="#909698" d="M19 9h-4V3H9v6H5l7 7 7-7zM5 18v2h14v-2H5z"/></svg></div>
    <div class="g-main times"><span>08: 00</span><span>08: 30</span><span>09: 00</span><span>09: 30</span><span>10: 00</span><span>10: 30</span><span>11: 00</span><span>11: 30</span><span>12: 00</span><span>12: 30</span><span>13: 00</span><span>13: 30</span><span>14: 00</span><span>14: 30</span><span>15: 00</span><span>15: 30</span><span>16: 00</span><i class="now-tip"></i></div>
    <div class="zoomer"><svg viewBox="3 3 18 18" width="20" height="20"><path fill="#909698" d="M15.500 14h-.79l-.28-.27C15.410 12.590 16 11.110 16 9.500 16 5.910 13.090 3 9.500 3S3 5.910 3 9.500 5.910 16 9.500 16c1.610 0 3.090-.59 4.230-1.570l.27.28v.79l5 4.990L20.490 19l-4.990-5zm-6 0C7.010 14 5 11.990 5 9.500S7.010 5 9.500 5 14 7.010 14 9.500 11.990 14 9.500 14zm.5-7H9v2H7v1h2v2h1v-2h2V9h-2V7z"/></svg><i></i></div></div>
  <div class="g-row r3"><div class="g-left truck">
      <svg viewBox="1 2 22 21" width="26" height="23"><path fill="#757575" d="M12 7c2.760 0 5 2.240 5 5 0 .65-.13 1.260-.36 1.830l2.920 2.920c1.510-1.260 2.700-2.890 3.430-4.750-1.730-4.390-6-7.500-11-7.500-1.400 0-2.740.25-3.980.7l2.160 2.160C10.740 7.130 11.350 7 12 7zM2 4.270l2.280 2.280.46.46C3.080 8.300 1.780 10.020 1 12c1.730 4.390 6 7.500 11 7.500 1.550 0 3.030-.3 4.380-.84l.42.42L19.730 22 21 20.730 3.270 3 2 4.270zM7.530 9.800l1.550 1.550c-.05.21-.08.43-.08.65 0 1.660 1.340 3 3 3 .22 0 .44-.03.65-.08l1.550 1.550c-.67.33-1.410.53-2.200.53-2.760 0-5-2.240-5-5 0-.79.2-1.530.53-2.200zm4.310-.78l3.150 3.150.02-.16c0-1.660-1.340-3-3-3l-.17.01z"/></svg>
      <div class="t-info"><span class="shift">7BAFDC5B-SHIFT-221227-0001</span><b>43C-17870</b><span class="type">SEMI-TRUCK/</span></div>
      <svg viewBox="1 4 22 16" width="25" height="19"><path fill="#909698" d="M20 8h-3V4H3c-1.100 0-2 .9-2 2v11h2c0 1.660 1.340 3 3 3s3-1.340 3-3h6c0 1.660 1.340 3 3 3s3-1.340 3-3h2v-5l-3-4zM6 18.500c-.83 0-1.500-.67-1.500-1.500s.67-1.500 1.500-1.500 1.500.67 1.500 1.500-.67 1.500-1.500 1.500zm13.500-9l1.960 2.500H17V9.500h2.500zm-1.500 9c-.83 0-1.500-.67-1.500-1.500s.67-1.500 1.500-1.500 1.500.67 1.500 1.500-.67 1.500-1.500 1.500z"/></svg></div>
    <div class="g-main lane">
      <span class="load">W:12%-V:77%</span>
      <i class="link"></i>
      <span class="depot" style="left:77px;width:95px"><svg viewBox="0 0 26 26" width="26" height="26"><path fill="#fff" d="M0 25.500V7L13 0l13 7v18.500h-3.500V10h-19v15.500z"/><path fill="#fff" d="M6 14.500h2.800v2.500H6zM10 14.500h2.800v2.500H10zM6 18.500h2.800V21H6zM10 18.500h2.800V21H10zM14 18.500h2.800V21H14zM6 22.500h2.800V25H6zM10 22.500h2.800V25H10zM14 22.500h2.800V25H14zM18 22.500h2.800V25H18z"/></svg></span>
      <span class="stop" style="left:337px">1<i style="background:#fa8416"></i></span>
      <span class="stop" style="left:407px">2<i style="background:#ff6f6f"></i></span>
      <span class="stop" style="left:477px">3<i style="background:#0d8548"></i></span>
      <span class="depot" style="left:664px;width:36px"><svg viewBox="0 0 26 26" width="26" height="26"><path fill="#fff" d="M0 25.500V7L13 0l13 7v18.500h-3.500V10h-19v15.500z"/><path fill="#fff" d="M6 14.500h2.800v2.500H6zM10 14.500h2.800v2.500H10zM6 18.500h2.800V21H6zM10 18.500h2.800V21H10zM14 18.500h2.800V21H14zM6 22.500h2.800V25H6zM10 22.500h2.800V25H10zM14 22.500h2.800V25H14zM18 22.500h2.800V25H18z"/></svg></span>
      <i class="now"></i>
      <i class="focus"></i>
    </div><div class="gs bottom"><b></b><i class="down"></i></div></div>
  <div class="hbar"><i class="lt"></i><b style="width:970px"></b><i class="rt"></i><u></u></div>
</div>

<div class="stats">
  <dl><div style="width:76px"><dt>Shifts</dt><dd>1</dd></div><div style="width:82px"><dt>Orders</dt><dd>3</dd></div><div style="width:110px"><dt>Distance</dt><dd>114.67 KM</dd></div><div style="width:153px"><dt>Revenue</dt><dd>147,778,974 VND</dd></div><div style="width:153px"><dt>Productivity</dt><dd>147,777,817 VND</dd></div><div style="width:165px"><dt>Revenue/Distance</dt><dd>1,288,755 VND/KM</dd></div><div style="width:170px"><dt>Weight/Capacity</dt><dd>157.50/1,250.00 KG</dd></div><div style="width:130px"><dt>Volume/Capacity</dt><dd>6.30/8.13 M3</dd></div></dl>
  <div class="hbar short"><i class="lt"></i><b style="width:739px"></b><i class="rt"></i></div>
</div>
</section>
</div>
</body>
</html>
```
FILE: styles.css
```css
* { box-sizing: border-box; }
body { margin: 0; width: 1912px; height: 901px; overflow: hidden; background: #fff; font-family: Roboto, "Noto Sans", sans-serif; color: #333; display: flex; flex-direction: column; }
button { font-family: inherit; padding: 0; margin: 0; }
svg { display: block; flex: none; }

.header { height: 66px; flex: none; border-top: 2px solid #9fcfd4; border-bottom: 1px solid #e4e5e8; display: flex; align-items: center; padding-left: 22px; }
.logo-mark { margin-top: 0; }
.logo-text { font: 800 24px/30px Inter, sans-serif; color: #1b64b0; margin: -1px 0 0 3px; letter-spacing: 1.250px; width: 120px; }
.burger { display: flex; flex-direction: column; gap: 6.500px; margin-top: 6px; }
.burger i { width: 24px; height: 1px; background: #3a7ec5; }
.burger i:nth-child(2) { height: 2px; }
.header-right { margin-left: auto; display: flex; align-items: center; height: 100%; }
.days { color: #fa8416; font-weight: 500; font-size: 17.500px; margin-right: 15px; }
.enterprise { width: 142px; height: 41px; margin-top: 5px; border: 0; border-radius: 5px; background: #2f80ed; color: #fff; display: flex; align-items: center; padding-left: 11px; gap: 11px; font: 600 16.500px "Open Sans", sans-serif; margin-right: 10px; }
.help { margin-top: 4px; margin-right: 27px; }
.avatar { width: 44px; height: 44px; border-radius: 50%; background: #0d8abc; color: #fff; font-weight: 500; font-size: 19px; display: grid; place-items: center; margin-top: 10px; margin-right: 34px; }
.chev { margin-top: 3px; margin-right: 49px; }
.mail { position: relative; margin-top: 8px; margin-right: 33px; }
.mail b { position: absolute; left: -12px; top: -11px; width: 23px; height: 22px; border-radius: 50%; background: #d9432f; color: #fff; font-size: 13px; font-weight: 500; line-height: 21px; text-align: center; box-shadow: 0 2px 4px #0005; }

.main { flex: 1; display: flex; min-height: 0; }
.sidebar { width: 207px; margin-top: -1px; height: 836px; background: #1b64b0; border-right: 3px solid #f3f6fa; position: relative; flex: none; padding-top: 0; }
.item { height: 51.200px; display: flex; align-items: center; color: #fff; font-weight: 300; font-size: 17px; letter-spacing: .1px; gap: 10px; padding-left: 16px; }
.item svg { width: 26px; height: 24px; fill: #fff; }
.item.active { background: #17528f; height: 50px; position: relative; }
.item.active::after { content: ""; position: absolute; right: 0; top: 10px; border: 15px solid transparent; border-left: 0; border-right-color: #fff; }
.item.settings { border-top: 1px solid #4a86c4; height: 50px; }
.version { margin: 6px 0 0 18px; font-size: 15px; font-weight: 500; color: #84abd5; }
.language { position: absolute; left: 36px; bottom: 0; width: 165px; height: 51px; background: #fdc513; color: #111; font-size: 17px; display: flex; align-items: center; padding: 4px 0 0 39px; gap: 10px; }
.language i { width: 20px; height: 20px; border: 3px solid #111; border-radius: 50%; }
.chat { position: absolute; left: 18px; top: 744px; width: 75px; height: 75px; border-radius: 50%; background: #fdc513; box-shadow: 0 3px 9px #0006; display: grid; place-items: center; }

.content { flex: 1; min-width: 0; display: flex; flex-direction: column; }
.map { position: relative; height: 527px; flex: none; }
.map::after { content: ""; position: absolute; left: 0; top: 0; width: 1134px; height: 12px; background: linear-gradient(#0000001a, transparent); }
.lbl { font-weight: 500; font-size: 16px; fill: #4f5459; stroke: #f5f6f8; stroke-width: 3px; paint-order: stroke; stroke-linejoin: round; }
.small { font-size: 13px; }
.road { font-size: 12.500px; font-weight: 400; }
.river { font-size: 15px; fill: #3a6fc9; }
.google { font: 500 22px Roboto, sans-serif; fill: #fff; stroke: #9a9da3; stroke-width: 3px; paint-order: stroke; }

.toolbar { position: absolute; left: 12px; top: 12px; display: flex; align-items: center; gap: .5px; z-index: 1; }
.tb { background: #fff; border: 1px solid #2a94ea; border-radius: 4px; display: flex; align-items: center; justify-content: center; color: #1b64b0; box-shadow: 0 5px 9px #0002; }
.tb.side { width: 80px; height: 44px; }
.tb.branch { width: 241px; height: 42px; font-size: 18px; font-weight: 500; letter-spacing: .05px; gap: 17px; padding-bottom: 1px; }
.caret { border: 5.500px solid transparent; border-top: 6px solid #1b64b0; border-bottom: 0; margin-top: 2px; }
.square { position: absolute; left: 10px; top: 115px; width: 44px; height: 43px; background: #fff; border: 1px solid #2a94ea; border-radius: 5px; box-shadow: 0 3px 5px #0005; padding: 6px; }
.square i { display: block; width: 29px; height: 29px; border-radius: 3px; background: #1b64b0; }
.maptype { position: absolute; left: 750px; top: 12px; width: 210px; height: 50px; display: flex; background: #fff; box-shadow: 0 1px 4px #0003; font-size: 22px; color: #565656; border-radius: 2px; z-index: 1; }
.maptype span { flex: 1; display: grid; place-items: center; }
.maptype .on { flex: 0 0 87px; color: #000; font-weight: 500; border-right: 1px solid #e6e6e6; }
.attrib { position: absolute; right: 0; bottom: 0; height: 18px; display: flex; gap: 2px; font-size: 12.500px; color: #111; line-height: 19px; white-space: nowrap; }
.attrib span { background: #f3f4f6cc; padding: 0 6.500px; }
.attrib span:last-child { padding-right: 4px; }

.panel { position: absolute; right: 0; top: -1px; width: 571px; height: 502px; background: #f1f3f4; display: flex; flex-direction: column; z-index: 2; }
.p-title { height: 28px; display: flex; justify-content: space-between; align-items: center; padding: 0 26px 0 25px; font-size: 20px; }
.p-title svg { margin-top: -1px; }
.crumbs { height: 28px; display: flex; align-items: center; margin-top: 2px; padding: 5px 0 4px 30px; font-size: 18px; letter-spacing: .32px; color: #757575; white-space: nowrap; line-height: 20px; }
.crumbs svg { width: 8px; height: 12px; margin: 0 17px 0 17px; fill: none; stroke: #666; stroke-width: 1.800; }
.crumbs .cur { color: #2a94f4; }
.p-body { height: 377px; display: flex; margin-top: -1px; }
.p-scroll { width: 553px; padding: 2px 0 0 30px; background: linear-gradient(#ffe8cb 350px, #fff 350px); }
.orders { width: 452px; height: 366px; border: 4px solid #0000a0; border-radius: 2px; background: #fff; color: #fa8416; }
.status { height: 22px; background: #ffe8cb; text-align: center; font-size: 16px; letter-spacing: .1px; line-height: 21px; padding-left: 39px; }
.o-head { color: #757575; font-size: 15px; text-align: center; line-height: 18px; margin-top: 21px; padding-right: 4px; letter-spacing: .1px; }
.o-code { display: flex; align-items: center; height: 55px; margin-top: 21px; padding: 0 25px 0 22px; font-size: 18px; letter-spacing: .25px; }
.o-code span { flex: 1; padding-left: 50px; }
.o-row { height: 55px; display: flex; align-items: center; font-size: 18px; letter-spacing: .37px; padding-left: 36px; gap: 43.500px; white-space: nowrap; }
.o-row svg { width: 26px; height: 26px; fill: #757575; }
.vbar { width: 18px; background: #f1f1f1; padding-left: 3px; }
.vbar b { display: block; height: 78px; background: #c1c1c1; margin-top: 8px; }
.up { display: block; width: 0; margin: 8px auto 0 3px; border: 5px solid transparent; border-top: 0; border-bottom: 5px solid #a3a3a3; }
.p-actions { height: 68px; display: grid; grid-template-columns: repeat(4, 131.500px); padding: 11px 0 0 24px; color: #1b64b0; font-size: 16.200px; }
.p-actions a { display: flex; flex-direction: column; align-items: center; gap: 2px; white-space: nowrap; line-height: 22px; }
.p-actions svg { width: 22px; height: 22px; fill: #1b64b0; }
.feedback { position: absolute; right: 0; top: 319px; width: 41px; height: 137px; background: #d43a0b; border-radius: 4px 0 0 4px; z-index: 3; color: #fff; display: flex; flex-direction: column; align-items: center; }
.feedback span { writing-mode: vertical-rl; transform: rotate(180deg); font-size: 15.500px; letter-spacing: .6px; height: 72px; line-height: 18px; margin: 14px 0 13px 8px; }
.feedback svg { margin-left: 5px; }

.bluebar { height: 50px; flex: none; background: #218fe1; display: flex; align-items: center; color: #fff; font-size: 18px; font-weight: 700; letter-spacing: -.25px; padding-bottom: 1px; }
.plan { width: 62px; margin-left: 28px; }
.exec { width: 126px; height: 30px; border-radius: 15px; background: #d4effe; color: #1b64b0; display: grid; place-items: center; }
.bar-right { margin-left: auto; display: flex; align-items: center; padding-right: 13px; }
.bar-right b { width: 42.300px; text-align: center; }
.toggle { width: 48px; height: 25px; position: relative; margin-right: 14px; }
.toggle::before { content: ""; position: absolute; left: 8px; right: 0; top: 4px; height: 18px; border-radius: 9px; background: #175c92; }
.toggle i { position: absolute; left: 0; width: 25px; height: 25px; border-radius: 50%; background: #fafafa; box-shadow: 0 1px 3px #0006; }
.collapse { margin-left: 16px; }

.gantt { flex: none; border-left: 1px solid #e0e0e0; margin-left: -1px; width: 1706px; }
.g-row { display: flex; }
.r1 { height: 40px; } .r2 { height: 40px; } .r3 { height: 81px; }
.g-left { width: 314px; flex: none; border-right: 1px solid #e0e0e0; border-bottom: 1px solid #e0e0e0; font-size: 16.500px; }
.center { text-align: center; font-size: 15px; line-height: 36px; padding-left: 14px; }
.g-main { flex: 1; border-bottom: 1px solid #e0e0e0; min-width: 0; }
.date { font-size: 16.200px; line-height: 40px; text-align: right; padding-right: 94px; }
.vehicle { display: flex; align-items: center; gap: 10px; padding: 0 18px 1px 32px; }
.vehicle span { flex: 1; }
.times { display: flex; position: relative; padding-left: 37px; font-size: 16.500px; line-height: 39px; }
.times span { width: 75px; flex: none; text-align: center; }
.now-tip { position: absolute; left: 1096px; bottom: 0; border: 12px solid transparent; border-bottom: 0; border-top-color: #36baed; }
.zoomer { width: 65px; border-left: 1px solid #777; border-bottom: 1px solid #e0e0e0; display: flex; align-items: center; padding-left: 11px; gap: 11px; }
.zoomer i { border: 6px solid transparent; border-bottom: 0; border-top-color: #909698; }
.gs { width: 17px; background: #f1f1f1; padding-left: 2px; flex: none; }
.gs .up { margin-top: 11px; }
.gs b { display: block; background: #c1c1c1; }
.gs.top b { height: 19px; margin-top: 5px; }
.gs.bottom b { height: 42px; }
.down { display: block; width: 0; margin: 26px 0 0 3px; border: 5px solid transparent; border-bottom: 0; border-top-color: #505050; }
.truck { display: flex; padding-left: 13px; border-bottom: 0; overflow: hidden; }
.truck > svg { margin-top: 45px; }
.truck > svg:first-child { margin-top: 44px; }
.t-info { display: flex; flex-direction: column; width: 222px; margin-left: 20px; padding-top: 21px; color: #555; font-size: 15.500px; white-space: nowrap; }
.t-info .shift { color: #909698; line-height: 21px; font-size: 15px; }
.t-info b { font-size: 17.500px; font-weight: 500; color: #333; line-height: 29px; }
.t-info .type { line-height: 14px; }
.lane { position: relative; border: 0; background: repeating-linear-gradient(90deg, #f7f9fb 0 75px, #fff 75px 150px) 75px 0 no-repeat; }
.load { position: absolute; left: 79px; top: 15px; font-size: 15px; font-weight: 700; color: #909698; line-height: 20px; }
.link { position: absolute; left: 173px; top: 53px; width: 490px; height: 5px; background: #909698; }
.depot { position: absolute; top: 37px; height: 38px; background: #909698; border-radius: 2px; display: grid; place-items: center; }
.stop { position: absolute; top: 38px; width: 23px; height: 36px; background: #909698; border-radius: 3px; color: #fff; font-weight: 500; font-size: 18px; line-height: 36px; text-align: center; box-shadow: 0 0 0 1px #fff; }
.stop i { position: absolute; left: 14px; top: -3px; width: 12px; height: 12px; border-radius: 50%; }
.now { position: absolute; left: 1057px; top: 0; width: 2px; height: 81px; background: #36baed; }
.focus { position: absolute; left: 316px; top: 24px; width: 61px; height: 59px; border: 4px solid #0000ff; border-radius: 2px; z-index: 2; }
.hbar { height: 20px; background: #f1f1f1; display: flex; align-items: center; border-bottom: 1px solid #ddd; }
.hbar b { height: 17px; background: #c1c1c1; margin-top: 1px; }
.lt { border: 5px solid transparent; border-left: 0; border-right-color: #a3a3a3; margin: 0 8px 0 8px; }
.rt { border: 5px solid transparent; border-right: 0; border-left-color: #505050; margin-left: auto; margin-right: 8px; }
.hbar u { width: 17px; height: 20px; background: #dcdcdc; }

.stats { width: 1007px; overflow: hidden; }
.stats dl { margin: 0; height: 50px; display: flex; padding: 6px 0 0 19px; font-size: 15.300px; white-space: nowrap; }
.stats dl div { flex: none; }
.stats dt { color: #666; line-height: 22px; }
.stats dd { margin: 0; color: #2a8ee0; line-height: 22px; font-size: 14.900px; }
.hbar.short { height: 21px; border: 0; }
```
